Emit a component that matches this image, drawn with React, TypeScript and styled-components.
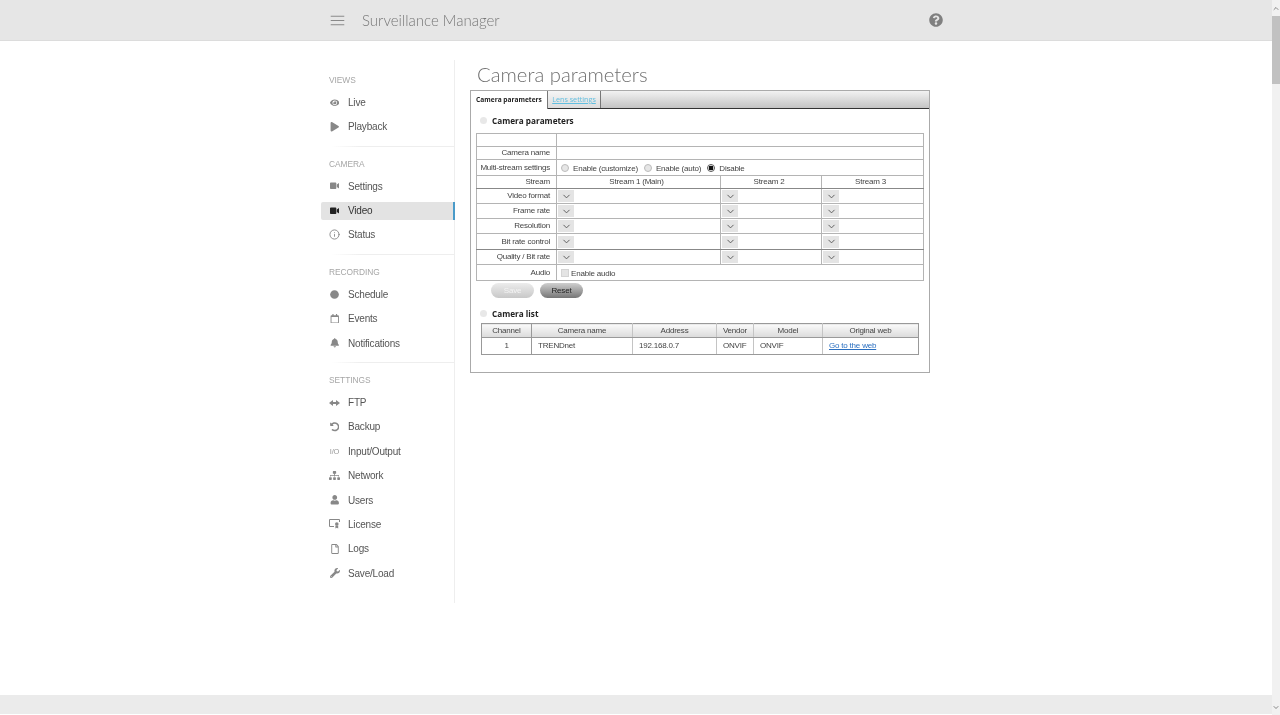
import type { ComponentType } from 'react'
import { createGlobalStyle, styled } from 'styled-components'
import {
  FaEye,
  FaPlay,
  FaVideo,
  FaCircle,
  FaRegCalendar,
  FaBell,
  FaUndoAlt,
  FaSitemap,
  FaUser,
  FaRegFile,
  FaWrench,
  FaQuestionCircle
} from 'react-icons/fa'
import { FiInfo, FiChevronDown, FiChevronUp, FiMenu } from 'react-icons/fi'

const GlobalStyle = createGlobalStyle`
  html, body {
    margin: 0;
    height: 100%;
    overflow: hidden;
    background: #fff;
  }
`

const Page = styled.div`
  display: flex;
  height: 715px;
  will-change: transform;
`

const Column = styled.div`
  flex: 1;
  min-width: 0;
  display: flex;
  flex-direction: column;
`

const Header = styled.header`
  height: 40px;
  background: #e6e6e6;
  border-bottom: 1px solid #dcdcdc;
`

const HeaderInner = styled.div`
  width: 630px;
  height: 100%;
  margin: 0 auto;
  padding: 0 8px;
  box-sizing: border-box;
  display: flex;
  align-items: center;
  color: #777;
`

const MenuButton = styled.span`
  display: flex;
  margin-right: 16px;
  color: #888;
  font-size: 17px;
`

const AppTitle = styled.span`
  flex: 1;
  font: 300 15px 'Lato', sans-serif;
  color: #777;
`

const Help = styled.span`
  display: flex;
  font-size: 14px;
  color: #808080;
`

const Body = styled.div`
  flex: 1;
  width: 630px;
  margin: 0 auto;
  display: flex;
  align-items: flex-start;
`

const Nav = styled.nav`
  width: 133px;
  margin-top: 19px;
  padding: 13px 0 21px;
  border-right: 1px solid #eee;
`

const NavSection = styled.div`
  display: flex;
  flex-direction: column;
  gap: 6.4px;
  padding-bottom: 10px;
  & + & {
    padding-top: 11px;
    background: linear-gradient(90deg, #fff 10px, #eee 40px) top / 100% 1px no-repeat;
  }
  &:last-child {
    padding-bottom: 0;
  }
`

const NavLabel = styled.div`
  height: 14px;
  padding-left: 8px;
  font: 8.4px/15px 'Liberation Sans', sans-serif;
  letter-spacing: -0.05px;
  color: #a6a6a6;
`

const NavItem = styled.div<{ $active?: boolean }>`
  height: 18px;
  display: flex;
  align-items: center;
  padding-left: 8px;
  box-sizing: border-box;
  border-radius: 2px 0 0 2px;
  font: 10px 'Liberation Sans', sans-serif;
  letter-spacing: -0.2px;
  color: ${p => (p.$active ? '#333' : '#555')};
  background: ${p => (p.$active ? '#e3e3e3' : 'transparent')};
  border-right: 2px solid ${p => (p.$active ? '#4a9bc9' : 'transparent')};
  margin-right: -1px;
`

const NavIcon = styled.span<{ $active?: boolean }>`
  width: 11px;
  margin-right: 8px;
  display: flex;
  justify-content: center;
  font-size: 9.5px;
  color: ${p => (p.$active ? '#222' : '#888')};
`

const IoGlyph = styled.span`
  font: 7.5px 'Liberation Sans', sans-serif;
  color: #999;
  white-space: nowrap;
`

const Main = styled.main`
  margin-left: 15px;
  width: 460px;
  padding-top: 21px;
`

const PageTitle = styled.h1`
  margin: 0 0 4px 7px;
  height: 24px;
  font: 300 20.3px/24px 'Lato', sans-serif;
  color: #707070;
`

const Frame = styled.div`
  height: 283px;
  border: 1px solid #aaa;
  box-sizing: border-box;
`

const TabBar = styled.div`
  height: 18px;
  display: flex;
  box-sizing: border-box;
  border-bottom: 1px solid #333;
  background: linear-gradient(#f2f2f2, #c4c4c4);
`

const Tab = styled.div<{ $active?: boolean }>`
  height: ${p => (p.$active ? '18px' : '17px')};
  width: ${p => (p.$active ? '77px' : '53px')};
  text-align: center;
  box-sizing: border-box;
  border-right: 1px solid #777;
  font: ${p => (p.$active ? '700 6.6px' : '400 7.2px')} / 17px 'Open Sans', sans-serif;
  color: ${p => (p.$active ? '#222' : '#62bfe0')};
  background: ${p => (p.$active ? '#fff' : 'linear-gradient(#f6f6f6, #dcdcdc)')};
  text-decoration: ${p => (p.$active ? 'none' : 'underline')};
`

const SectionHeading = styled.div`
  display: flex;
  align-items: center;
  height: 13px;
  padding-left: 4px;
  font: 700 8.2px/13px 'Open Sans', sans-serif;
  color: #222;
`

const HeadingDot = styled.span`
  width: 7px;
  height: 7px;
  margin-right: 5px;
  border-radius: 50%;
  background: #e8e8e8;
`

const ParamSection = styled.div`
  padding: 5px 0 0 5px;
`

const ParamTable = styled.table`
  margin-top: 6px;
  width: 448px;
  table-layout: fixed;
  border-collapse: collapse;
  font: 8px 'Liberation Sans', sans-serif;
  letter-spacing: -0.2px;
  color: #444;
  td {
    border: 1px solid #b4b4b4;
    padding: 0;
    overflow: hidden;
    white-space: nowrap;
  }
`

const ParamRow = styled.tr<{ $height: number; $dark?: boolean }>`
  height: ${p => p.$height}px;
  td {
    ${p => (p.$dark ? 'border-bottom-color: #888;' : '')}
  }
`

const LabelCell = styled.td`
  text-align: right;
  padding: 0 6px 1px 0 !important;
`

const CenterCell = styled.td`
  text-align: center;
  padding: 0 4px 1px 0 !important;
`

const SelectBox = styled.span`
  display: flex;
  align-items: center;
  justify-content: center;
  width: 16px;
  height: 12px;
  margin-left: 1px;
  background: #e4e4e4;
  color: #555;
  font-size: 11px;
`

const Options = styled.div`
  display: flex;
  align-items: center;
  padding-left: 4px;
`

const Radio = styled.span<{ $checked?: boolean }>`
  width: 8px;
  height: 8px;
  box-sizing: border-box;
  margin-right: 4px;
  border-radius: 50%;
  border: 1px solid ${p => (p.$checked ? '#555' : '#bbb')};
  background: ${p => (p.$checked ? 'radial-gradient(circle, #111 2.2px, #fff 2.6px)' : '#e6e6e6')};
`

const OptionText = styled.span`
  margin-right: 6px;
  padding-top: 2px;
`

const CheckBox = styled.span`
  width: 8px;
  height: 8px;
  margin-right: 2px;
  background: #e4e4e4;
  border: 1px solid #d4d4d4;
  box-sizing: border-box;
`

const ButtonRow = styled.div`
  display: flex;
  gap: 6px;
  margin: 2px 0 0 15px;
`

const Pill = styled.button<{ $disabled?: boolean }>`
  width: 43px;
  height: 15px;
  padding: 0;
  border: 0;
  border-radius: 8px;
  font: 8px 'Liberation Sans', sans-serif;
  letter-spacing: -0.2px;
  color: ${p => (p.$disabled ? '#f4f4f4' : '#222')};
  background: ${p =>
    p.$disabled ? 'linear-gradient(#ececec, #c8c8c8)' : 'linear-gradient(#cfcfcf, #767676)'};
`

const ListSection = styled.div`
  margin-top: 9px;
  padding-left: 5px;
`

const ListTable = styled.table`
  margin: 3px 0 0 5px;
  width: 437px;
  table-layout: fixed;
  border-collapse: collapse;
  font: 8px 'Liberation Sans', sans-serif;
  letter-spacing: -0.2px;
  color: #444;
  border: 1px solid #999;
  th {
    height: 13px;
    padding: 0;
    font-weight: 400;
    border: 1px solid #c4c4c4;
    border-top-color: #999;
    border-bottom-color: #999;
    background: linear-gradient(#fafafa, #dadada);
  }
  td {
    height: 15px;
    padding: 0 0 1px 6px;
    border: 1px solid #c4c4c4;
    border-bottom-color: #999;
    white-space: nowrap;
  }
  th:first-child, th:last-child, td:first-child, td:last-child {
    border-left-color: #999;
    border-right-color: #999;
  }
`

const ChannelCell = styled.td`
  text-align: center;
  padding: 0 0 1px !important;
`

const WebLink = styled.a`
  color: #2a6fc0;
  text-decoration: underline;
`

const Footer = styled.footer`
  height: 19px;
  margin-bottom: 1px;
  background: #ebebeb;
`

const Scrollbar = styled.div`
  width: 8px;
  display: flex;
  flex-direction: column;
  background: #f1f1f1;
`

const ScrollArrow = styled.span`
  height: 16px;
  display: flex;
  align-items: center;
  justify-content: center;
  color: #505050;
  font-size: 9px;
`

const ScrollThumb = styled.div`
  height: 68px;
  background: #c1c1c1;
`

const ScrollSpace = styled.div`
  flex: 1;
`

const TransferIcon = () => (
  <svg width="11" height="8" viewBox="0 0 11 8" fill="currentColor">
    <path d="M0 4 4 1v2h3V1l4 3-4 3V5H4v2z" />
  </svg>
)

const LicenseIcon = () => (
  <svg width="11" height="10" viewBox="0 0 11 10" fill="none" stroke="currentColor">
    <path d="M5 7.5H.5v-7h10V3" />
    <circle cx="7.8" cy="5" r="1.8" fill="currentColor" stroke="none" />
    <path d="M6.4 6.5v3l1.4-.8 1.4.8v-3" fill="currentColor" stroke="none" />
  </svg>
)

type Item = { label: string; icon?: ComponentType; active?: boolean; io?: boolean }

const sections: { title: string; items: Item[] }[] = [
  {
    title: 'VIEWS',
    items: [
      { label: 'Live', icon: FaEye },
      { label: 'Playback', icon: FaPlay }
    ]
  },
  {
    title: 'CAMERA',
    items: [
      { label: 'Settings', icon: FaVideo },
      { label: 'Video', icon: FaVideo, active: true },
      { label: 'Status', icon: () => <FiInfo size={11} /> }
    ]
  },
  {
    title: 'RECORDING',
    items: [
      { label: 'Schedule', icon: () => <FaCircle size={9} /> },
      { label: 'Events', icon: FaRegCalendar },
      { label: 'Notifications', icon: FaBell }
    ]
  },
  {
    title: 'SETTINGS',
    items: [
      { label: 'FTP', icon: TransferIcon },
      { label: 'Backup', icon: FaUndoAlt },
      { label: 'Input/Output', io: true },
      { label: 'Network', icon: () => <FaSitemap size={11} /> },
      { label: 'Users', icon: FaUser },
      { label: 'License', icon: LicenseIcon },
      { label: 'Logs', icon: () => <FaRegFile size={10} /> },
      { label: 'Save/Load', icon: () => <FaWrench size={10} /> }
    ]
  }
]

const selectRows = [
  { label: 'Video format', height: 15 },
  { label: 'Frame rate', height: 15 },
  { label: 'Resolution', height: 15 },
  { label: 'Bit rate control', height: 16, dark: true },
  { label: 'Quality / Bit rate', height: 15 }
]

const Select = () => (
  <SelectBox>
    <FiChevronDown />
  </SelectBox>
)

export default function App() {
  return (
    <Page>
      <GlobalStyle />
      <Column>
        <Header>
          <HeaderInner>
            <MenuButton>
              <FiMenu strokeWidth={1.4} />
            </MenuButton>
            <AppTitle>Surveillance Manager</AppTitle>
            <Help>
              <FaQuestionCircle />
            </Help>
          </HeaderInner>
        </Header>
        <Body>
          <Nav>
            {sections.map(section => (
              <NavSection key={section.title}>
                <NavLabel>{section.title}</NavLabel>
                {section.items.map(({ label, icon: Icon, active, io }) => (
                  <NavItem key={label} $active={active}>
                    <NavIcon $active={active}>
                      {io ? <IoGlyph>I/O</IoGlyph> : Icon && <Icon />}
                    </NavIcon>
                    {label}
                  </NavItem>
                ))}
              </NavSection>
            ))}
          </Nav>
          <Main>
            <PageTitle>Camera parameters</PageTitle>
            <Frame>
              <TabBar>
                <Tab $active>Camera parameters</Tab>
                <Tab>Lens settings</Tab>
              </TabBar>
              <ParamSection>
                <SectionHeading>
                  <HeadingDot />
                  Camera parameters
                </SectionHeading>
                <ParamTable>
                  <colgroup>
                    <col width={80} />
                    <col width={164} />
                    <col width={101} />
                    <col width={102} />
                  </colgroup>
                  <tbody>
                    <ParamRow $height={13}>
                      <td />
                      <td colSpan={3} />
                    </ParamRow>
                    <ParamRow $height={13}>
                      <LabelCell>Camera name</LabelCell>
                      <td colSpan={3} />
                    </ParamRow>
                    <ParamRow $height={16}>
                      <LabelCell>Multi-stream settings</LabelCell>
                      <td colSpan={3}>
                        <Options>
                          <Radio />
                          <OptionText>Enable (customize)</OptionText>
                          <Radio />
                          <OptionText>Enable (auto)</OptionText>
                          <Radio $checked />
                          <OptionText>Disable</OptionText>
                        </Options>
                      </td>
                    </ParamRow>
                    <ParamRow $height={13} $dark>
                      <LabelCell>Stream</LabelCell>
                      <CenterCell>Stream 1 (Main)</CenterCell>
                      <CenterCell>Stream 2</CenterCell>
                      <CenterCell>Stream 3</CenterCell>
                    </ParamRow>
                    {selectRows.map(row => (
                      <ParamRow key={row.label} $height={row.height} $dark={row.dark}>
                        <LabelCell>{row.label}</LabelCell>
                        <td><Select /></td>
                        <td><Select /></td>
                        <td><Select /></td>
                      </ParamRow>
                    ))}
                    <ParamRow $height={16}>
                      <LabelCell>Audio</LabelCell>
                      <td colSpan={3}>
                        <Options>
                          <CheckBox />
                          <OptionText>Enable audio</OptionText>
                        </Options>
                      </td>
                    </ParamRow>
                  </tbody>
                </ParamTable>
                <ButtonRow>
                  <Pill $disabled>Save</Pill>
                  <Pill>Reset</Pill>
                </ButtonRow>
              </ParamSection>
              <ListSection>
                <SectionHeading>
                  <HeadingDot />
                  Camera list
                </SectionHeading>
                <ListTable>
                  <colgroup>
                    <col width={50} />
                    <col width={101} />
                    <col width={84} />
                    <col width={37} />
                    <col width={69} />
                    <col width={96} />
                  </colgroup>
                  <thead>
                    <tr>
                      <th>Channel</th>
                      <th>Camera name</th>
                      <th>Address</th>
                      <th>Vendor</th>
                      <th>Model</th>
                      <th>Original web</th>
                    </tr>
                  </thead>
                  <tbody>
                    <tr>
                      <ChannelCell>1</ChannelCell>
                      <td>TRENDnet</td>
                      <td>192.168.0.7</td>
                      <td>ONVIF</td>
                      <td>ONVIF</td>
                      <td><WebLink href="#">Go to the web</WebLink></td>
                    </tr>
                  </tbody>
                </ListTable>
              </ListSection>
            </Frame>
          </Main>
        </Body>
        <Footer />
      </Column>
      <Scrollbar>
        <ScrollArrow><FiChevronUp /></ScrollArrow>
        <ScrollThumb />
        <ScrollSpace />
        <ScrollArrow><FiChevronDown /></ScrollArrow>
      </Scrollbar>
    </Page>
  )
}
